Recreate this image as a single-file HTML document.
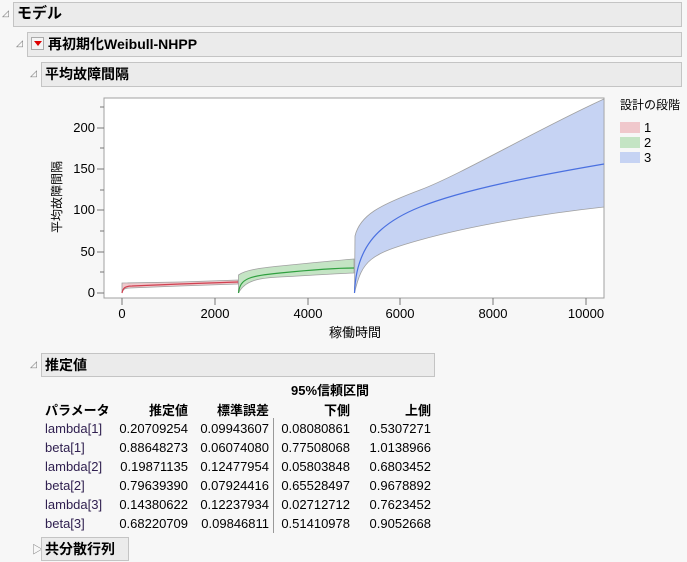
<!DOCTYPE html>
<html><head><meta charset="utf-8"><style>
body{margin:0;width:687px;height:562px;background:#f7f7f7;position:relative;overflow:hidden;font-family:"Liberation Sans","Noto Sans CJK JP",sans-serif;color:#000}
.bar{position:absolute;background:#ebebeb;border:1px solid #c4c4c4;box-sizing:border-box;font-weight:bold;font-size:14px;line-height:22px;padding-left:3px}
.tri{position:absolute;font-size:9px;color:#777}
.t{position:absolute;font-size:13px;white-space:nowrap}
.r{text-align:right}
</style></head><body>
<div class="tri" style="left:2px;top:8px">◿</div>
<div class="bar" style="left:13px;top:2px;width:669px;height:25px;font-size:15px">モデル</div>
<div class="tri" style="left:16px;top:38px">◿</div>
<div class="bar" style="left:27px;top:32px;width:655px;height:25px;padding-left:20px">再初期化Weibull-NHPP</div>
<div style="position:absolute;left:31px;top:37px;width:13px;height:13px;border:1px solid #aaa;background:#f4f4f4;box-sizing:border-box"><div style="position:absolute;left:2px;top:3px;width:0;height:0;border-left:4px solid transparent;border-right:4px solid transparent;border-top:5px solid #d00"></div></div>
<div class="tri" style="left:30px;top:68px">◿</div>
<div class="bar" style="left:41px;top:62px;width:641px;height:25px">平均故障間隔</div>

<svg style="position:absolute;left:0;top:0" width="687" height="562">
<rect x="104" y="98" width="500" height="200" fill="#fff" stroke="#a0a0a0"/>
<g stroke="#777" stroke-width="1">
<line x1="97" y1="293" x2="104" y2="293"/><line x1="97" y1="252" x2="104" y2="252"/><line x1="97" y1="210" x2="104" y2="210"/><line x1="97" y1="169" x2="104" y2="169"/><line x1="97" y1="128" x2="104" y2="128"/>
<line x1="100" y1="272" x2="104" y2="272"/><line x1="100" y1="231" x2="104" y2="231"/><line x1="100" y1="190" x2="104" y2="190"/><line x1="100" y1="148" x2="104" y2="148"/><line x1="100" y1="107" x2="104" y2="107"/>
<line x1="122" y1="298" x2="122" y2="305"/><line x1="215" y1="298" x2="215" y2="305"/><line x1="308" y1="298" x2="308" y2="305"/><line x1="400" y1="298" x2="400" y2="305"/><line x1="493" y1="298" x2="493" y2="305"/><line x1="586" y1="298" x2="586" y2="305"/>
</g>
<path d="M122,283 L180,282 L238,280 L238,284 L180,286 L130,288 C125,288 123,289 122,293Z" fill="#f0c8cc" stroke="#a0a0a0" stroke-width="0.8"/>
<path d="M122,293 C123,288 125,286 132,286 L180,284 L238,282" fill="none" stroke="#d04050" stroke-width="1.2"/>
<path d="M238.5,275 C245,270 260,268 280,266 S330,261 354,259 L354,273 C330,274 300,276 280,277 S245,280 238.5,293Z" fill="#c4e4c4" stroke="#a0a0a0" stroke-width="0.8"/>
<path d="M238.5,293 C240,278 250,276 280,273 S340,268 354,268" fill="none" stroke="#30a040" stroke-width="1.2"/>
<path d="M355,236 C360,215 380,205 420,190 S540,128 604,99 L604,207 C540,214 470,226 420,240 S362,260 354.5,293Z" fill="#c6d3f3" stroke="#a0a0a0" stroke-width="0.8"/>
<path d="M354.5,293 C356,250 375,225 420,207 S540,175 604,164" fill="none" stroke="#4a70e0" stroke-width="1.2"/>
<g font-size="13" font-family="Liberation Sans,sans-serif" text-anchor="end">
<text x="95" y="297">0</text><text x="95" y="256">50</text><text x="95" y="214">100</text><text x="95" y="173">150</text><text x="95" y="132">200</text>
</g>
<g font-size="13" font-family="Liberation Sans,sans-serif" text-anchor="middle">
<text x="122" y="318">0</text><text x="215" y="318">2000</text><text x="308" y="318">4000</text><text x="400" y="318">6000</text><text x="493" y="318">8000</text><text x="586" y="318">10000</text>
<text x="355" y="337" font-family="Liberation Sans,Noto Sans CJK JP,sans-serif">稼働時間</text>
<text transform="translate(61,197) rotate(-90)" font-family="Liberation Sans,Noto Sans CJK JP,sans-serif" font-size="12">平均故障間隔</text>
</g>
<text x="620" y="109" font-size="12" font-family="Liberation Sans,Noto Sans CJK JP,sans-serif">設計の段階</text>
<rect x="620" y="122" width="20" height="11" fill="#f0c8cc"/><rect x="620" y="137" width="20" height="11" fill="#c4e4c4"/><rect x="620" y="152" width="20" height="11" fill="#c6d3f3"/>
<g font-size="13" font-family="Liberation Sans,sans-serif"><text x="644" y="132">1</text><text x="644" y="147">2</text><text x="644" y="162">3</text></g>
<line x1="273.5" y1="418" x2="273.5" y2="533" stroke="#999"/>
</svg>

<div class="tri" style="left:30px;top:359px">◿</div>
<div class="bar" style="left:41px;top:353px;width:394px;height:24px">推定値</div>
<div class="t" style="left:275px;top:380px;width:110px;text-align:center;font-weight:bold">95%信頼区間</div>
<div class="t" style="left:45px;top:400px;font-weight:bold">パラメータ</div>
<div class="t r" style="left:100px;top:400px;width:88px;font-weight:bold">推定値</div>
<div class="t r" style="left:180px;top:400px;width:89px;font-weight:bold">標準誤差</div>
<div class="t r" style="left:260px;top:400px;width:90px;font-weight:bold">下側</div>
<div class="t r" style="left:340px;top:400px;width:91px;font-weight:bold">上側</div>
<div class="t" style="left:45px;top:419px;line-height:19px;color:#302050">lambda[1]<br>beta[1]<br>lambda[2]<br>beta[2]<br>lambda[3]<br>beta[3]</div>
<div class="t r" style="left:100px;top:419px;width:88px;line-height:19px">0.20709254<br>0.88648273<br>0.19871135<br>0.79639390<br>0.14380622<br>0.68220709</div>
<div class="t r" style="left:180px;top:419px;width:89px;line-height:19px">0.09943607<br>0.06074080<br>0.12477954<br>0.07924416<br>0.12237934<br>0.09846811</div>
<div class="t r" style="left:260px;top:419px;width:90px;line-height:19px">0.08080861<br>0.77508068<br>0.05803848<br>0.65528497<br>0.02712712<br>0.51410978</div>
<div class="t r" style="left:340px;top:419px;width:91px;line-height:19px">0.5307271<br>1.0138966<br>0.6803452<br>0.9678892<br>0.7623452<br>0.9052668</div>
<div class="tri" style="left:32px;top:541px;font-size:11px">▷</div>
<div class="bar" style="left:41px;top:537px;width:88px;height:24px">共分散行列</div>
</body></html>
